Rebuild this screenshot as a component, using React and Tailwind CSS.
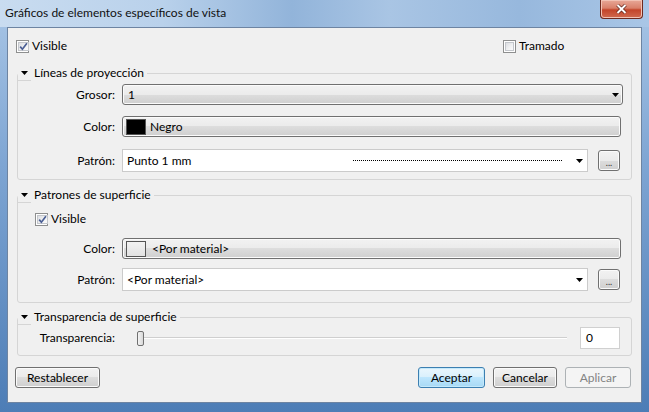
const winBtn =
  "border border-[#707070] rounded-[3px] bg-[linear-gradient(to_bottom,#f2f2f2_0%,#ebebeb_50%,#dddddd_50%,#cfcfcf_100%)] shadow-[inset_0_0_0_1px_#fbfbfb]";

function Arrow() {
  return (
    <svg width="7" height="4" viewBox="0 0 7 4" className="block">
      <path d="M0 0h7L3.5 4z" fill="#000" />
    </svg>
  );
}

function Check({ checked }) {
  return (
    <span className="w-[13px] h-[13px] border border-[#8e8f8f] bg-white p-[1px] flex shrink-0">
      <span className="flex-1 border border-[#c3c6cb] bg-[linear-gradient(135deg,#dcdee2_0%,#f1f2f3_60%,#fbfbfb_100%)] flex items-center justify-center">
        {checked && (
          <svg width="9" height="9" viewBox="0 0 9 9" className="block">
            <path d="M1.2 4.6 L3.4 7.2 L7.9 1.3" stroke="#4a5e94" strokeWidth="1.7" fill="none" />
          </svg>
        )}
      </span>
    </span>
  );
}

function Group({ title, children, className = "" }) {
  return (
    <fieldset className={"border border-[#d5d5d5] rounded-[3px] " + className}>
      <legend className="h-[16px] flex items-center">
        <span className="w-[13px] h-[16px] flex items-center justify-center border-b border-[#d5d5d5] bg-[#f0f0f0]">
          <Arrow />
        </span>
        <span className="pl-[3px] pr-[3px] leading-[16px]">{title}</span>
      </legend>
      {children}
    </fieldset>
  );
}

function Row({ label, children, className = "" }) {
  return (
    <div className={"flex items-center " + className}>
      <span className="w-[97px] text-right">{label}</span>
      <div className="ml-[7px] flex-1 flex items-center">{children}</div>
    </div>
  );
}

function Dots() {
  return (
    <button className={winBtn + " w-[22px] h-[21px] ml-[10px] flex items-end justify-center pb-[3px] text-[9px] leading-[9px] text-[#333]"}>
      ...
    </button>
  );
}

export default function App() {
  return (
    <div className="w-[649px] h-[412px] flex flex-col overflow-hidden bg-[linear-gradient(to_bottom,#a9c6e6_0%,#7ea5d3_40%,#4d7db6_100%)] font-['Segoe_UI',Lato,sans-serif] text-[12px] text-black">
      <div className="h-[27px] flex justify-between bg-[linear-gradient(to_right,#c9dcf0_0%,#b9d1eb_25%,#92b4da_45%,#a9c5e4_60%,#97b8dd_80%,#a9c6e6_100%)]">
        <span className="pl-[5px] pt-[5px] leading-[16px] text-[#111]">Gráficos de elementos específicos de vista</span>
        <button className="w-[43px] h-[19px] mr-[6px] border border-t-0 border-[#6e2a1f] rounded-b-[4px] bg-[linear-gradient(to_bottom,#e8a898_0%,#d9806a_45%,#c3452a_55%,#d06a4f_100%)] shadow-[inset_0_0_0_1px_#f2c2b4] flex items-center justify-center">
          <svg width="11" height="10" viewBox="0 0 11 10" className="block">
            <path d="M1.5 1 L9.5 9 M9.5 1 L1.5 9" stroke="#5a1e14" strokeWidth="3.4" />
            <path d="M1.5 1 L9.5 9 M9.5 1 L1.5 9" stroke="#fff" strokeWidth="2" />
          </svg>
        </button>
      </div>

      <div className="mx-[7px] mb-[9px] flex-1 border border-[#6d84a2] bg-[#f0f0f0] flex flex-col px-[9px]">
        <div className="flex h-[16px] items-center mt-[10px] -ml-[1px]">
          <div className="w-[487px] flex items-center gap-[3px]">
            <Check checked />
            <span>Visible</span>
          </div>
          <div className="flex items-center gap-[3px]">
            <Check />
            <span>Tramado</span>
          </div>
        </div>

        <Group title="Líneas de proyección" className="mt-[11px] pb-[7px]">
          <Row label="Grosor:" className="mt-[3px] mr-[8px]">
            <div className={winBtn + " flex-1 h-[21px] flex items-center pl-[5px] pr-[3px]"}>
              <span className="flex-1">1</span>
              <Arrow />
            </div>
          </Row>
          <Row label="Color:" className="mt-[11px] mr-[10px]">
            <div className={winBtn + " flex-1 h-[21px] flex items-center pl-[3px]"}>
              <span className="w-[20px] h-[16px] bg-black border border-[#555]" />
              <span className="ml-[4px]">Negro</span>
            </div>
          </Row>
          <Row label="Patrón:" className="mt-[12px] mr-[11px]">
            <div className="flex-1 h-[23px] bg-white border border-[#cbcbcb] flex items-center pl-[4px] pr-[4px]">
              <span className="w-[226px]">Punto 1 mm</span>
              <span className="w-[209px] border-t border-dotted border-black" />
              <span className="flex-1" />
              <Arrow />
            </div>
            <Dots />
          </Row>
        </Group>

        <Group title="Patrones de superficie" className="mt-[7px] pb-[11px]">
          <div className="flex items-center gap-[3px] h-[16px] mt-[8px] ml-[17px]">
            <Check checked />
            <span>Visible</span>
          </div>
          <Row label="Color:" className="mt-[11px] mr-[10px]">
            <div className={winBtn + " flex-1 h-[21px] flex items-center pl-[3px]"}>
              <span className="w-[20px] h-[16px] bg-[linear-gradient(to_bottom,#f2f2f2,#e2e2e2)] border border-[#555]" />
              <span className="ml-[6px]">&lt;Por material&gt;</span>
            </div>
          </Row>
          <Row label="Patrón:" className="mt-[9px] mr-[11px]">
            <div className="flex-1 h-[23px] bg-white border border-[#cbcbcb] flex items-center pl-[4px] pr-[4px]">
              <span className="flex-1">&lt;Por material&gt;</span>
              <Arrow />
            </div>
            <Dots />
          </Row>
        </Group>

        <Group title="Transparencia de superficie" className="mt-[6px] pb-[6px]">
          <div className="flex items-center mt-[2px] mr-[11px]">
            <span className="w-[97px] text-right">Transparencia:</span>
            <div className="ml-[22px] flex-1 flex items-center h-[16px]">
              <span className="w-[7px] h-[15px] rounded-[2px] border border-[#707070] bg-[linear-gradient(to_right,#f4f4f4,#d8d8d8)]" />
              <span className="flex-1 h-[2px] border-t border-[#cfcfcf] border-b-white border-b" />
            </div>
            <div className="ml-[13px] w-[40px] h-[22px] bg-white border border-[#d0d0d0] flex items-center pl-[5px]">0</div>
          </div>
        </Group>

        <div className="flex mt-[11px] -ml-[2px] mr-[1px]">
          <button className={winBtn + " w-[85px] h-[21px]"}>Restablecer</button>
          <span className="flex-1" />
          <button className="w-[67px] h-[21px] border border-[#3c7fb1] rounded-[3px] bg-[linear-gradient(to_bottom,#eaf6fd_0%,#d9f0fc_50%,#bee6fd_50%,#a7d9f5_100%)] shadow-[inset_0_0_0_1px_#c4e9fb]">Aceptar</button>
          <button className={winBtn + " w-[64px] h-[21px] ml-[8px]"}>Cancelar</button>
          <button className="w-[66px] h-[21px] ml-[8px] border border-[#adb2b5] rounded-[3px] bg-[#f4f4f4] text-[#838383]">Aplicar</button>
        </div>
      </div>
    </div>
  );
}
